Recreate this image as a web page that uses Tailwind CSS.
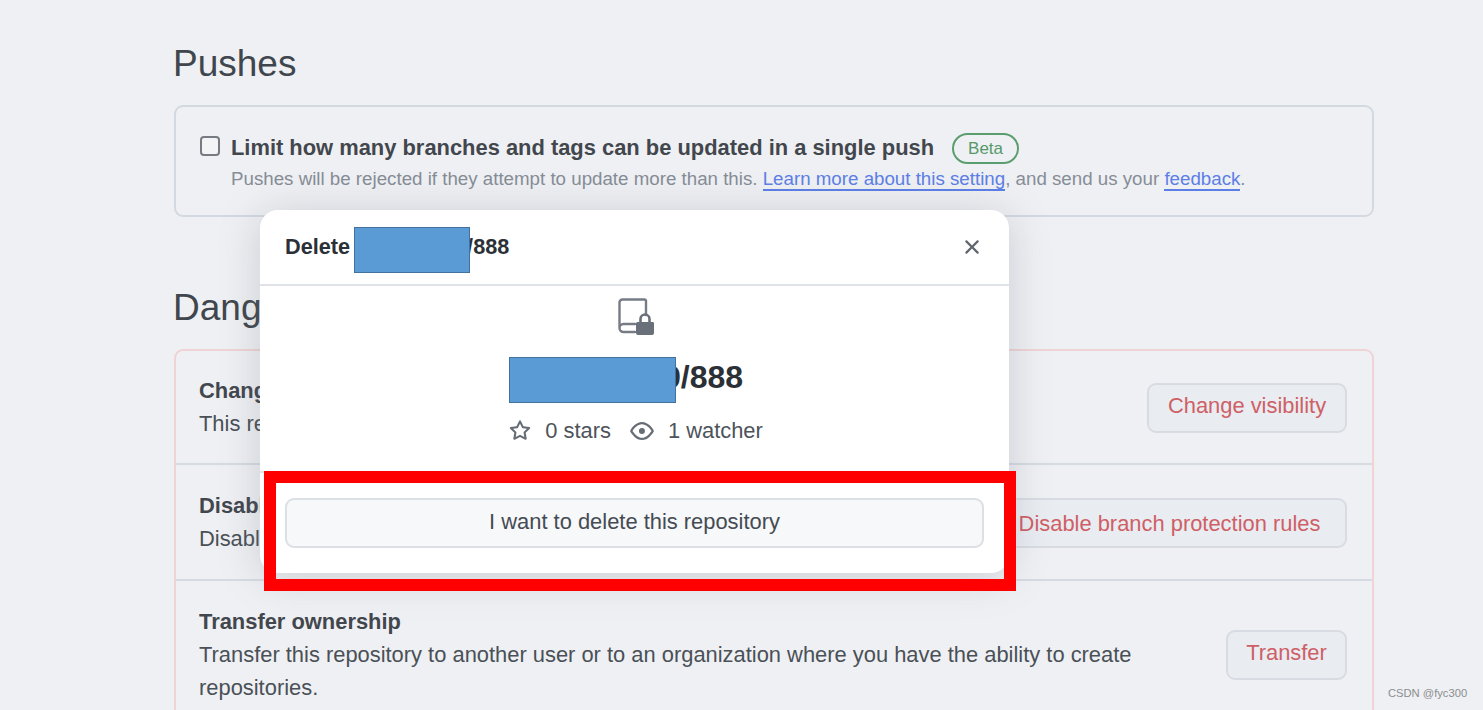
<!DOCTYPE html>
<html lang="en">
<head>
  <meta charset="UTF-8" />
  <title>Delete repository</title>
  <script src="https://cdn.jsdelivr.net/npm/@tailwindcss/browser@4"></script>
</head>
<body class="relative h-[710px] overflow-hidden bg-[#eff0f3] font-['Liberation_Sans',Arial,sans-serif] text-[21.9px] leading-[33px] text-[#4a5057]">
  <main class="ml-[174px] w-[1200px] pt-[40px]">
    <h2 class="-ml-px mb-[19px] h-[46px] text-[37px] leading-[48px] text-[#40464d]">Pushes</h2>

    <section class="mb-[67px] flex h-[112px] items-start gap-[11px] rounded-[9px] border-2 border-[#d3d9e0] pl-[24px] pt-[25px]">
      <span class="mt-[4px] h-[20px] w-[20px] shrink-0 rounded-[4px] border-2 border-[#767b82] bg-[#f3f4f6]"></span>
      <div>
        <div class="flex h-[30px] items-center">
          <span class="font-bold text-[#42474e]">Limit how many branches and tags can be updated in a single push</span>
          <span class="ml-[18px] mt-[2px] flex h-[31px] w-[67px] items-center justify-center rounded-full border-2 border-[#5a9e6f] text-[17px] text-[#55996a]">Beta</span>
        </div>
        <p class="mt-[1px] text-[18.73px] leading-[31px] text-[#868d97]">Pushes will be rejected if they attempt to update more than this. <a class="border-b-2 border-[#5c7fe6] text-[#5c7fe6]">Learn more about this setting</a>, and send us your <a class="border-b-2 border-[#5c7fe6] text-[#5c7fe6]">feedback</a>.</p>
      </div>
    </section>

    <h2 class="-ml-px mb-[19px] h-[46px] text-[37px] leading-[48px] text-[#40464d]">Danger Zone</h2>

    <section class="rounded-t-[9px] border-2 border-[#f0d3d4]">
      <div class="flex h-[114px] items-center justify-between border-b-2 border-[#d6dbe2] pl-[23px] pr-[25px]">
        <div>
          <h3 class="font-bold text-[#42474e]">Change repository visibility</h3>
          <p>This repository is currently private.</p>
        </div>
        <button class="mt-[2px] h-[50px] w-[200px] rounded-[9px] border-2 border-[#d8dce2] bg-[#e9ecf1] pb-[5px] text-[#cf5f66]">Change visibility</button>
      </div>
      <div class="flex h-[116px] items-center justify-between border-b-2 border-[#d6dbe2] pl-[23px] pr-[25px]">
        <div>
          <h3 class="font-bold text-[#42474e]">Disable branch protection rules</h3>
          <p>Disable branch protection rules enforcement and APIs</p>
        </div>
        <button class="mt-[2px] h-[50px] w-[355px] rounded-[9px] border-2 border-[#d8dce2] bg-[#e9ecf1] text-[#cf5f66]">Disable branch protection rules</button>
      </div>
      <div class="flex items-center justify-between pb-[24px] pl-[23px] pr-[25px] pt-[24px]">
        <div class="w-[960px]">
          <h3 class="font-bold text-[#42474e]">Transfer ownership</h3>
          <p>Transfer this repository to another user or to an organization where you have the ability to create repositories.</p>
        </div>
        <button class="h-[50px] w-[121px] rounded-[9px] border-2 border-[#d8dce2] bg-[#e9ecf1] pb-[4px] text-[#cf5f66]">Transfer</button>
      </div>
    </section>
  </main>

  <!-- Delete dialog -->
  <div class="absolute left-[260px] top-[210px] w-[749px] rounded-[18px] bg-white shadow-[0_4px_40px_rgba(100,110,125,0.28)]">
    <header class="flex h-[76px] items-center justify-between border-b-2 border-[#dfe2e7] pl-[25px] pr-[25px]">
      <div class="flex items-center text-[21.7px] font-bold text-[#2b3036]">
        <span class="mb-[2px]">Delete</span>
        <span class="relative z-10 ml-[4px] mt-[6px] h-[46px] w-[116px] border border-[#41719c] bg-[#5b9bd5]"></span>
        <span class="-ml-[3px] mb-[2px]">/888</span>
      </div>
      <svg class="h-[24px] w-[24px] text-[#5f666e]" viewBox="0 0 16 16" fill="currentColor"><path d="M3.72 3.72a.75.75 0 0 1 1.06 0L8 6.94l3.22-3.22a.749.749 0 0 1 1.275.326.749.749 0 0 1-.215.734L9.06 8l3.22 3.22a.749.749 0 0 1-.326 1.275.749.749 0 0 1-.734-.215L8 9.06l-3.22 3.22a.751.751 0 0 1-1.042-.018.751.751 0 0 1-.018-1.042L6.94 8 3.72 4.78a.75.75 0 0 1 0-1.06Z"/></svg>
    </header>

    <div class="relative flex h-[187px] flex-col items-center border-b-2 border-[#e3e5e9] pt-[12px]">
      <svg class="ml-[2px] h-[38px] w-[36px]" viewBox="0 0 36 38" fill="none">
        <path d="M17 26H5.5a4 4 0 0 0 0 8H17M1.5 30V4.5a3 3 0 0 1 3-3h22a1.5 1.5 0 0 1 1.5 1.5v14" stroke="#757c85" stroke-width="2.4" stroke-linecap="round" stroke-linejoin="round"/>
        <path d="M21 24h14a1.5 1.5 0 0 1 1 1.5v9.5a2 2 0 0 1-2 2H20a2 2 0 0 1-2-2v-9.5a1.5 1.5 0 0 1 1.5-1.5Z" fill="#697079"/>
        <path d="M22.5 25v-4a4.5 4.5 0 0 1 9 0v4" stroke="#697079" stroke-width="2.6"/>
      </svg>
      <h1 class="mt-[18px] h-[46px] text-[32px] font-bold leading-[46px] text-[#2b3036]"><span class="inline-block w-[137px]"></span>9/888</h1>
      <span class="absolute left-[249px] top-[71px] h-[46px] w-[167px] border border-[#41719c] bg-[#5b9bd5]"></span>
      <div class="ml-[3px] mt-[14px] flex h-[33px] items-center text-[#4d535a]">
        <svg class="h-[22px] w-[22px] text-[#666d76]" viewBox="0 0 16 16" fill="currentColor"><path d="M8 .25a.75.75 0 0 1 .673.418l1.882 3.815 4.21.612a.75.75 0 0 1 .416 1.279l-3.046 2.97.719 4.192a.751.751 0 0 1-1.088.791L8 12.347l-3.766 1.98a.75.75 0 0 1-1.088-.79l.72-4.194L.818 6.374a.75.75 0 0 1 .416-1.28l4.21-.611L7.327.668A.75.75 0 0 1 8 .25Zm0 2.445L6.615 5.5a.75.75 0 0 1-.564.41l-3.097.45 2.24 2.184a.75.75 0 0 1 .216.664l-.528 3.084 2.769-1.456a.75.75 0 0 1 .698 0l2.77 1.456-.53-3.084a.75.75 0 0 1 .216-.664l2.24-2.183-3.096-.45a.75.75 0 0 1-.564-.41L8 2.694Z"/></svg>
        <span class="ml-[14px]">0 stars</span>
        <svg class="ml-[19px] h-[24px] w-[24px] text-[#666d76]" viewBox="0 0 16 16" fill="currentColor"><path d="M8 2c1.981 0 3.671.992 4.933 2.078 1.27 1.091 2.187 2.345 2.637 3.023a1.62 1.62 0 0 1 0 1.798c-.45.678-1.367 1.932-2.637 3.023C11.67 13.008 9.981 14 8 14c-1.981 0-3.671-.992-4.933-2.078C1.797 10.83.88 9.576.43 8.898a1.62 1.62 0 0 1 0-1.798c.45-.677 1.367-1.931 2.637-3.022C4.33 2.992 6.019 2 8 2ZM1.679 7.932a.12.12 0 0 0 0 .136c.411.622 1.241 1.75 2.366 2.717C5.176 11.758 6.527 12.5 8 12.5c1.473 0 2.825-.742 3.955-1.715 1.124-.967 1.954-2.096 2.366-2.717a.12.12 0 0 0 0-.136c-.412-.621-1.242-1.75-2.366-2.717C10.824 4.242 9.473 3.5 8 3.5c-1.473 0-2.825.742-3.955 1.715-1.124.967-1.954 2.096-2.366 2.717ZM8 10a2 2 0 1 1-.001-3.999A2 2 0 0 1 8 10Z"/></svg>
        <span class="ml-[14px]">1 watcher</span>
      </div>
    </div>

    <div class="px-[25px] pb-[25px] pt-[25px]">
      <button class="h-[50px] w-full rounded-[9px] border-2 border-[#dcdfe4] bg-[#f6f8fa] pb-[4px] text-[#454b52]">I want to delete this repository</button>
    </div>
  </div>

  <!-- Annotation frame -->
  <div class="absolute left-[264px] top-[471px] h-[120px] w-[752px] border-[12px] border-[#ff0000]"></div>

  <span class="absolute left-[1388px] top-[686px] text-[11.2px] leading-[14px] text-[#8b8d90]">CSDN @fyc300</span>
</body>
</html>
